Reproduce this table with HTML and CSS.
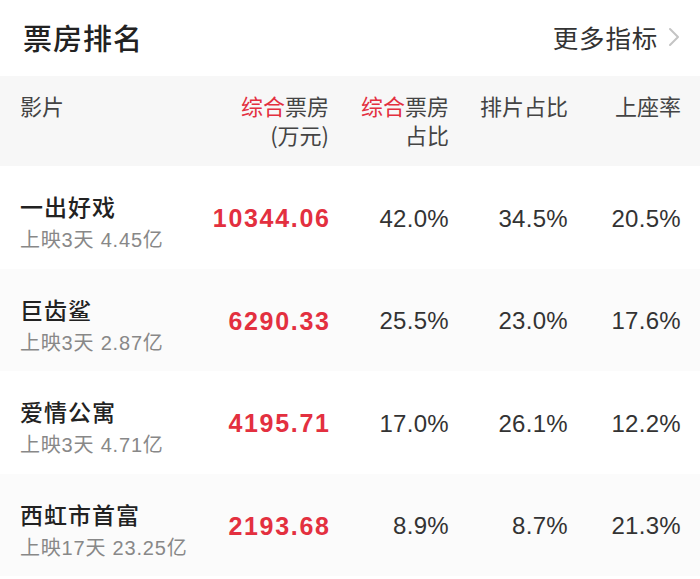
FILE: index.html
```html
<!DOCTYPE html>
<html lang="zh-CN">
<head>
<meta charset="utf-8">
<title>票房排名</title>
<link rel="stylesheet" href="styles.css">
</head>
<body>
<div class="page">
  <header class="topbar">
    <h1 class="title">票房排名</h1>
    <a class="more">更多指标<svg class="chev" width="12" height="20" viewBox="0 0 12 20"><path d="M2 2 L10 10 L2 18" fill="none" stroke="#c4c4c4" stroke-width="2" stroke-linecap="round" stroke-linejoin="round"/></svg></a>
  </header>
  <div class="thead">
    <div class="c-name">影片</div>
    <div class="c-box"><span class="red">综合</span>票房<br>(万元)</div>
    <div class="c-share"><span class="red">综合</span>票房<br>占比</div>
    <div class="c-sched">排片占比</div>
    <div class="c-seat">上座率</div>
  </div>
  <div class="row">
    <div class="c-name"><div class="mname">一出好戏</div><div class="sub">上映3天 4.45亿</div></div>
    <div class="c-box num">10344.06</div>
    <div class="c-share pct">42.0%</div>
    <div class="c-sched pct">34.5%</div>
    <div class="c-seat pct">20.5%</div>
  </div>
  <div class="row alt">
    <div class="c-name"><div class="mname">巨齿鲨</div><div class="sub">上映3天 2.87亿</div></div>
    <div class="c-box num">6290.33</div>
    <div class="c-share pct">25.5%</div>
    <div class="c-sched pct">23.0%</div>
    <div class="c-seat pct">17.6%</div>
  </div>
  <div class="row">
    <div class="c-name"><div class="mname">爱情公寓</div><div class="sub">上映3天 4.71亿</div></div>
    <div class="c-box num">4195.71</div>
    <div class="c-share pct">17.0%</div>
    <div class="c-sched pct">26.1%</div>
    <div class="c-seat pct">12.2%</div>
  </div>
  <div class="row alt">
    <div class="c-name"><div class="mname">西虹市首富</div><div class="sub">上映17天 23.25亿</div></div>
    <div class="c-box num">2193.68</div>
    <div class="c-share pct">8.9%</div>
    <div class="c-sched pct">8.7%</div>
    <div class="c-seat pct">21.3%</div>
  </div>
</div>
</body>
</html>
```
FILE: styles.css
```css
html, body {
  margin: 0;
  padding: 0;
  background: #ffffff;
}
body {
  font-family: "Liberation Sans", "Noto Sans CJK SC", sans-serif;
  color: #333333;
  width: 700px;
  height: 579px;
  overflow: hidden;
}
.page {
  width: 700px;
}
.topbar {
  height: 76px;
  display: flex;
  align-items: center;
  justify-content: space-between;
  padding: 0 20px 0 23px;
  box-sizing: border-box;
}
.title {
  margin: 0;
  font-family: "Noto Sans CJK SC", sans-serif;
  font-size: 29px;
  font-weight: 500;
  color: #222222;
  letter-spacing: 1px;
  line-height: 1;
  padding-bottom: 2px;
}
.more {
  display: flex;
  align-items: center;
  font-family: "Noto Sans CJK SC", sans-serif;
  font-size: 25.5px;
  color: #333333;
  letter-spacing: 0.8px;
  line-height: 1;
  padding-bottom: 2px;
}
.chev {
  margin-left: 10px;
}
.thead, .row {
  display: flex;
  padding: 0 19px 0 20px;
}
.thead {
  background: #f7f7f7;
  height: 90px;
  box-sizing: border-box;
  padding-top: 15px;
  font-family: "Noto Sans CJK SC", sans-serif;
  font-size: 22px;
  line-height: 29px;
  color: #444444;
}
.thead .c-name { text-align: left; }
.red { color: #e3303f; }
.c-name { flex: 1; min-width: 0; }
.c-box { width: 130px; text-align: right; }
.c-share { width: 120px; text-align: right; }
.c-sched { width: 119px; text-align: right; }
.c-seat { width: 113px; text-align: right; }
.row {
  height: 102.5px;
  box-sizing: border-box;
  align-items: center;
}
.row.alt { background: #fbfbfb; }
.row .c-name {
  align-self: flex-start;
  padding-top: 23px;
}
.mname {
  font-family: "Noto Sans CJK SC", sans-serif;
  font-size: 23px;
  font-weight: 500;
  line-height: 34px;
  letter-spacing: 1px;
  color: #222222;
}
.sub {
  font-size: 20px;
  line-height: 34px;
  color: #888888;
  letter-spacing: 0.8px;
}
.num {
  font-size: 25px;
  font-weight: 700;
  color: #e3303f;
  letter-spacing: 1.7px;
  margin-right: -1.7px;
  padding-top: 3px;
}
.pct {
  font-size: 24px;
  color: #333333;
  letter-spacing: 0.3px;
  padding-top: 3px;
}
```
